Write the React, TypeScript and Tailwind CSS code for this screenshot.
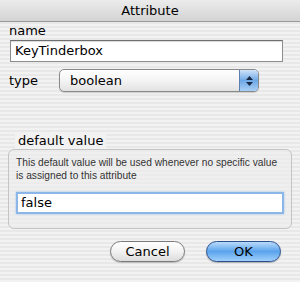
import React from 'react'

const font = { fontFamily: '"DejaVu Sans", "Liberation Sans", sans-serif' }

const App = () => {
    return (
        <div
            className="w-[300px] h-[282px] overflow-hidden bg-[repeating-linear-gradient(to_bottom,#f2f2f2_0px,#f2f2f2_2px,#e8e8e8_2px,#e8e8e8_4px)] text-black"
            style={font}
        >
            {/* title bar */}
            <div className="h-[22px] flex items-center justify-center bg-gradient-to-b from-[#ececec] to-[#d3d3d3] border-b border-[#9a9a9a] text-[13px]">
                Attribute
            </div>

            <div className="px-[8px]">
                <div className="text-[13px] leading-[16px] mt-[1px] ml-[1px]">name</div>
                <div className="mt-[1px] ml-[2px] w-[273px] h-[22px] bg-white border border-[#8e8e8e] border-t-[#6f6f6f] shadow-[inset_0_1px_1px_rgba(0,0,0,0.15)] flex items-center px-[4px] text-[13px]">
                    KeyTinderbox
                </div>

                <div className="flex items-center mt-[7px]">
                    <span className="text-[13px] w-[50px] ml-[1px]">type</span>
                    <div className="w-[200px] h-[23px] rounded-[5px] border border-[#8a8a8a] bg-gradient-to-b from-white via-[#f4f4f4] to-[#e2e2e2] flex items-center overflow-hidden shadow-[0_1px_1px_rgba(0,0,0,0.15)]">
                        <span className="flex-1 pl-[10px] text-[13px]">boolean</span>
                        <div className="w-[19px] h-full bg-gradient-to-b from-[#cfe3f8] via-[#6ea8e6] to-[#a8d0f5] border-l border-[#5b7fb0] flex flex-col items-center justify-center gap-[2px]">
                            <svg width="7" height="4" viewBox="0 0 7 4"><path d="M3.5 0L7 4H0z" fill="#1a2a44" /></svg>
                            <svg width="7" height="4" viewBox="0 0 7 4"><path d="M0 0h7L3.5 4z" fill="#1a2a44" /></svg>
                        </div>
                    </div>
                </div>

                {/* default value group */}
                <div className="mt-[57px] relative">
                    <div className="absolute -top-[17px] left-[7px] px-[3px] text-[13px] leading-[17px] bg-[#f2f2f2]">default value</div>
                    <div className="h-[80px] rounded-[6px] border border-[#c4c4c4] bg-[#ececec]/60 px-[7px] pt-[6px]">
                        <p className="whitespace-nowrap text-[10.2px] leading-[13px] text-[#333]" style={{ fontFamily: '"Liberation Sans", Arial, sans-serif' }}>
                            This default value will be used whenever no specific value
                            <br />
                            is assigned to this attribute
                        </p>
                        <div className="mt-[10px] h-[22px] bg-white border-2 border-[#8cb6e8] flex items-center px-[3px] text-[13px] shadow-[0_0_2px_#9ec3ef]">
                            false
                        </div>
                    </div>
                </div>

                <div className="flex justify-end gap-[21px] mt-[12px] mr-[11px]">
                    <button className="w-[75px] h-[21px] rounded-full border border-[#7a7a7a] bg-gradient-to-b from-white via-[#f2f2f2] to-[#dcdcdc] text-[13px] leading-none shadow-[0_1px_1px_rgba(0,0,0,0.2)]">
                        Cancel
                    </button>
                    <button className="w-[75px] h-[21px] rounded-full border border-[#2b4f8a] bg-gradient-to-b from-[#b9dbfa] via-[#5aa3ec] to-[#9fd0fb] text-[13px] leading-none shadow-[0_1px_1px_rgba(0,0,0,0.25)]">
                        OK
                    </button>
                </div>
            </div>
        </div>
    )
}

export default App
